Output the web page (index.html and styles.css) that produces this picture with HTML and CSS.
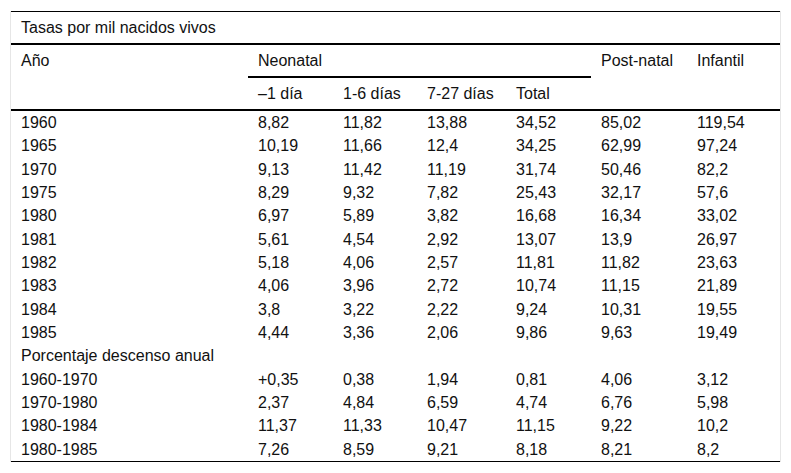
FILE: index.html
```html
<!DOCTYPE html>
<html lang="es">
<head>
<meta charset="utf-8">
<title>Tasas por mil nacidos vivos</title>
<link rel="stylesheet" href="styles.css">
</head>
<body>
<div class="wrap">
<table class="data">
<colgroup>
<col class="c1"><col class="c2"><col class="c3"><col class="c4"><col class="c5"><col class="c6"><col class="c7">
</colgroup>
<thead>
<tr><th class="title" colspan="7">Tasas por mil nacidos vivos</th></tr>
<tr>
<th class="hd span2" rowspan="2">Año</th>
<th class="hd group" colspan="4">Neonatal</th>
<th class="hd span2" rowspan="2">Post-natal</th>
<th class="hd span2" rowspan="2">Infantil</th>
</tr>
<tr>
<th class="hd sub">–1 día</th>
<th class="hd sub">1-6 días</th>
<th class="hd sub">7-27 días</th>
<th class="hd sub">Total</th>
</tr>
</thead>
<tbody>
<tr><td>1960</td><td>8,82</td><td>11,82</td><td>13,88</td><td>34,52</td><td>85,02</td><td>119,54</td></tr>
<tr><td>1965</td><td>10,19</td><td>11,66</td><td>12,4</td><td>34,25</td><td>62,99</td><td>97,24</td></tr>
<tr><td>1970</td><td>9,13</td><td>11,42</td><td>11,19</td><td>31,74</td><td>50,46</td><td>82,2</td></tr>
<tr><td>1975</td><td>8,29</td><td>9,32</td><td>7,82</td><td>25,43</td><td>32,17</td><td>57,6</td></tr>
<tr><td>1980</td><td>6,97</td><td>5,89</td><td>3,82</td><td>16,68</td><td>16,34</td><td>33,02</td></tr>
<tr><td>1981</td><td>5,61</td><td>4,54</td><td>2,92</td><td>13,07</td><td>13,9</td><td>26,97</td></tr>
<tr><td>1982</td><td>5,18</td><td>4,06</td><td>2,57</td><td>11,81</td><td>11,82</td><td>23,63</td></tr>
<tr><td>1983</td><td>4,06</td><td>3,96</td><td>2,72</td><td>10,74</td><td>11,15</td><td>21,89</td></tr>
<tr><td>1984</td><td>3,8</td><td>3,22</td><td>2,22</td><td>9,24</td><td>10,31</td><td>19,55</td></tr>
<tr><td>1985</td><td>4,44</td><td>3,36</td><td>2,06</td><td>9,86</td><td>9,63</td><td>19,49</td></tr>
<tr><td colspan="7">Porcentaje descenso anual</td></tr>
<tr><td>1960-1970</td><td>+0,35</td><td>0,38</td><td>1,94</td><td>0,81</td><td>4,06</td><td>3,12</td></tr>
<tr><td>1970-1980</td><td>2,37</td><td>4,84</td><td>6,59</td><td>4,74</td><td>6,76</td><td>5,98</td></tr>
<tr><td>1980-1984</td><td>11,37</td><td>11,33</td><td>10,47</td><td>11,15</td><td>9,22</td><td>10,2</td></tr>
<tr class="last"><td>1980-1985</td><td>7,26</td><td>8,59</td><td>9,21</td><td>8,18</td><td>8,21</td><td>8,2</td></tr>
</tbody>
</table>
</div>
</body>
</html>
```
FILE: styles.css
```css
html, body {
  margin: 0;
  padding: 0;
  background: #fff;
}
body {
  padding: 11px 10px 0 10px;
  font-family: "Liberation Sans", Arial, sans-serif;
  font-size: 16px;
  color: #111;
}
.wrap {
  width: 769px;
  border-left: 1px solid #e6e6e6;
  border-right: 1px solid #e6e6e6;
}
.data {
  width: 769px;
  table-layout: fixed;
  border-collapse: separate;
  border-spacing: 0;
  border-top: 1px solid #000;
}
.c1 { width: 237px; }
.c2 { width: 85px; }
.c3 { width: 84px; }
.c4 { width: 89px; }
.c5 { width: 85px; }
.c6 { width: 96px; }
.c7 { width: 93px; }
.data th,
.data td {
  text-align: left;
  font-weight: normal;
  white-space: nowrap;
  padding: 0 10px;
}
.data th {
  padding-top: 6px;
  padding-bottom: 6px;
  line-height: 19px;
  vertical-align: top;
}
.title {
  border-bottom: 2px solid #000;
}
.group,
.sub,
.span2 {
  border-bottom: 2px solid #000;
}
.data td {
  padding-top: 2px;
  padding-bottom: 2px;
  line-height: 19.33px;
  vertical-align: middle;
}
.last td {
  border-bottom: 1px solid #000;
}
```
